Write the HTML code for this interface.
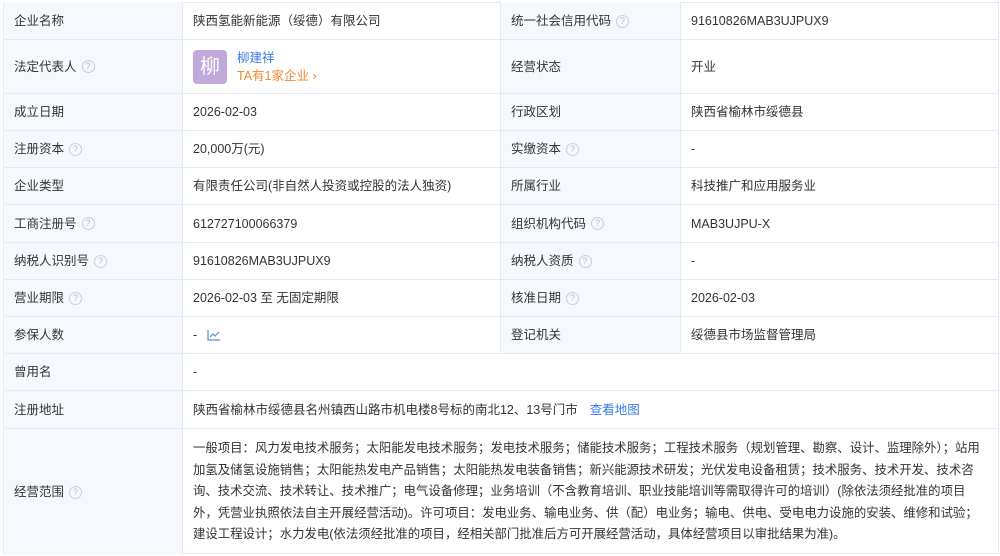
<!DOCTYPE html>
<html><head><meta charset="utf-8"><style>
*{margin:0;padding:0;box-sizing:border-box}
body{width:1000px;height:556px;background:#fff;font-family:"Liberation Sans","Noto Sans CJK SC",sans-serif;font-size:12.5px;color:#333;position:relative;overflow:hidden}
.tbl{position:absolute;left:3px;top:2px;width:996px;height:552px;border:1px solid #e6eaf0}
.r{position:absolute;left:0;width:994px;border-top:1px solid #e6eaf0}
.c{position:absolute;top:0;bottom:0;display:flex;align-items:center;white-space:nowrap;line-height:16px}
.c>span.t{display:inline-block;line-height:16px;height:16px}
.l{background:#f5f8fc}
.c1{left:0;width:178px;padding-left:10px}
.c2{left:178px;width:318px;padding-left:10px;border-left:1px solid #e6eaf0}
.c3{left:496px;width:180px;padding-left:10px;border-left:1px solid #e6eaf0}
.c4{left:676px;width:318px;padding-left:10px;border-left:1px solid #e6eaf0}
.cw{left:178px;width:816px;padding-left:10px;border-left:1px solid #e6eaf0}
.q{display:inline-block;width:13px;height:13px;border:1px solid #ccd;border-radius:50%;color:#bbb;font-size:9px;line-height:11px;text-align:center;margin-left:5px}
.blue{color:#3a7ae6}
</style></head><body>
<div class="tbl">
<div class="r" style="top:-1px;height:38px;border-top:none">
<div class="c l c1">企业名称</div><div class="c c2">陕西氢能新能源（绥德）有限公司</div>
<div class="c l c3">统一社会信用代码<span class="q">?</span></div><div class="c c4"><span class="t">91610826MAB3UJPUX9</span></div></div>
<div class="r" style="top:36px;height:54px">
<div class="c l c1">法定代表人<span class="q">?</span></div>
<div class="c c2"><div style="width:34px;height:34px;background:#c1aad9;border-radius:4px;color:#fff;font-size:20px;display:flex;align-items:center;justify-content:center">柳</div>
<div style="margin-left:10px;line-height:18px"><div class="blue">柳建祥</div><div style="color:#f0892f">TA有1家企业 ›</div></div></div>
<div class="c l c3">经营状态</div><div class="c c4">开业</div></div>
<div class="r" style="top:90px;height:37px"><div class="c l c1">成立日期</div><div class="c c2"><span class="t">2026-02-03</span></div><div class="c l c3">行政区划</div><div class="c c4">陕西省榆林市绥德县</div></div>
<div class="r" style="top:127px;height:37px"><div class="c l c1">注册资本<span class="q">?</span></div><div class="c c2">20,000万(元)</div><div class="c l c3">实缴资本<span class="q">?</span></div><div class="c c4"><span class="t">-</span></div></div>
<div class="r" style="top:164px;height:37px"><div class="c l c1">企业类型</div><div class="c c2">有限责任公司(非自然人投资或控股的法人独资)</div><div class="c l c3">所属行业</div><div class="c c4">科技推广和应用服务业</div></div>
<div class="r" style="top:201px;height:38px"><div class="c l c1">工商注册号<span class="q">?</span></div><div class="c c2"><span class="t">612727100066379</span></div><div class="c l c3">组织机构代码<span class="q">?</span></div><div class="c c4"><span class="t">MAB3UJPU-X</span></div></div>
<div class="r" style="top:239px;height:37px"><div class="c l c1">纳税人识别号<span class="q">?</span></div><div class="c c2"><span class="t">91610826MAB3UJPUX9</span></div><div class="c l c3">纳税人资质<span class="q">?</span></div><div class="c c4"><span class="t">-</span></div></div>
<div class="r" style="top:276px;height:37px"><div class="c l c1">营业期限<span class="q">?</span></div><div class="c c2">2026-02-03 至 无固定期限</div><div class="c l c3">核准日期<span class="q">?</span></div><div class="c c4"><span class="t">2026-02-03</span></div></div>
<div class="r" style="top:313px;height:37px"><div class="c l c1">参保人数</div><div class="c c2"><span class="t">-</span><svg width="14" height="12" style="margin-left:10px" viewBox="0 0 14 12"><path d="M1 1V11H13M3 8L6 5L8 7L12 3" fill="none" stroke="#5b8be0" stroke-width="1.2"/></svg></div><div class="c l c3">登记机关</div><div class="c c4">绥德县市场监督管理局</div></div>
<div class="r" style="top:350px;height:37px"><div class="c l c1">曾用名</div><div class="c cw"><span class="t">-</span></div></div>
<div class="r" style="top:387px;height:38px"><div class="c l c1">注册地址</div><div class="c cw">陕西省榆林市绥德县名州镇西山路市机电楼8号标的南北12、13号门市<span class="blue" style="margin-left:12px">查看地图</span></div></div>
<div class="r" style="top:425px;height:127px"><div class="c l c1">经营范围<span class="q">?</span></div>
<div class="c cw" style="align-items:flex-start;padding-top:9px;font-size:12.4px;line-height:21.5px;display:block">
一般项目：风力发电技术服务；太阳能发电技术服务；发电技术服务；储能技术服务；工程技术服务（规划管理、勘察、设计、监理除外）；站用<br>
加氢及储氢设施销售；太阳能热发电产品销售；太阳能热发电装备销售；新兴能源技术研发；光伏发电设备租赁；技术服务、技术开发、技术咨<br>
询、技术交流、技术转让、技术推广；电气设备修理；业务培训（不含教育培训、职业技能培训等需取得许可的培训）(除依法须经批准的项目<br>
外，凭营业执照依法自主开展经营活动)。许可项目：发电业务、输电业务、供（配）电业务；输电、供电、受电电力设施的安装、维修和试验；<br>
建设工程设计；水力发电(依法须经批准的项目，经相关部门批准后方可开展经营活动，具体经营项目以审批结果为准)。
</div></div>
</div>
</body></html>
